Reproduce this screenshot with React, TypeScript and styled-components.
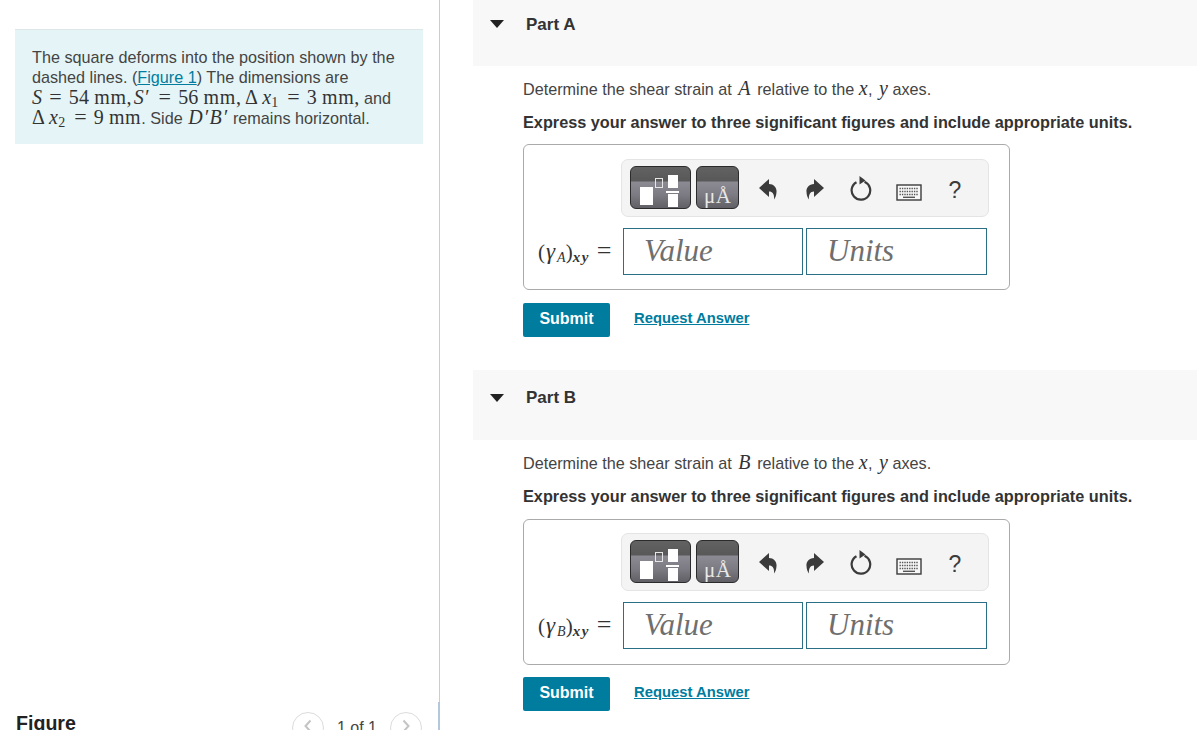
import React from "react";
import styled, { createGlobalStyle } from "styled-components";

const Global = createGlobalStyle`
  html, body { margin: 0; padding: 0; background: #fff; }
  body { font-family: "Liberation Sans", Arial, sans-serif; color: #444; overflow: hidden; }
`;

const Page = styled.div`
  width: 1197px;
  height: 730px;
  overflow: hidden;
  display: grid;
  grid-template-columns: 440px 1fr;
`;

const LeftColumn = styled.aside`
  position: relative;
  height: 730px;
  border-right: 1px solid #c9cdd0;
  box-sizing: border-box;
  padding: 29px 16px 0 15px;
  display: flex;
  flex-direction: column;
`;

const ScrollThumb = styled.div`
  position: absolute;
  right: -1px;
  top: 702px;
  width: 2px;
  height: 28px;
  background: #b5c7dc;
`;

const Intro = styled.div`
  flex: none;
  background: #e5f5f7;
  border-top: 1px solid #dfe6e6;
  height: 115px;
  box-sizing: border-box;
  padding: 18px 17px 0 17px;
  font-size: 16.2px;
  line-height: 19.5px;
  color: #444;
  white-space: nowrap;
`;

const TextLine = styled.div<{ $pt?: number }>`
  height: 19.5px;
  padding-top: ${(p) => p.$pt ?? 0}px;
`;

const FigureLink = styled.a`
  color: #007c9e;
  text-decoration: underline;
`;

const M = styled.span`
  display: inline-block;
  font-family: "Liberation Serif", "Times New Roman", serif;
  font-size: 20px;
  line-height: 17px;
  color: #333;
  letter-spacing: 0.2px;
`;

const MI = styled(M)<{ $l?: number; $r?: number; $track?: number }>`
  font-style: italic;
  margin-left: ${(p) => p.$l ?? 0}px;
  margin-right: ${(p) => p.$r ?? 0}px;
  letter-spacing: ${(p) => p.$track ?? 0.2}px;
`;

const Delta = styled(M)`
  margin-right: 4px;
`;

const Eq = styled(M)`
  margin: 0 7px 0 7px;
  font-size: 22px;
  line-height: 15px;
`;

const Sub = styled.span`
  display: inline-block;
  margin-right: 2px;
  font-family: "Liberation Serif", serif;
  font-size: 14px;
  line-height: 10px;
  position: relative;
  top: 3px;
  color: #333;
`;

const Unit = styled(M)`
  margin-left: 5px;
  letter-spacing: 0.6px;
`;

const Gap = styled.span<{ $w: number }>`
  display: inline-block;
  width: ${(p) => p.$w}px;
`;

const FigureBar = styled.div`
  flex: none;
  margin-top: 567px;
  display: flex;
  align-items: flex-start;
  justify-content: space-between;
  height: 40px;
`;

const FigureTitle = styled.div`
  font-weight: 700;
  font-size: 19.6px;
  line-height: 22px;
  color: #222;
  padding: 1px 0 0 1px;
`;

const Pager = styled.div`
  display: flex;
  align-items: flex-start;
  gap: 13px;
  margin-right: 1px;
  margin-top: 1px;
`;

const PagerButton = styled.div`
  width: 32px;
  height: 32px;
  border: 1px solid #dcdcdc;
  border-radius: 50%;
  box-sizing: border-box;
  display: flex;
  align-items: center;
  justify-content: center;
  background: #fff;
  svg { display: block; margin-bottom: 5px; }
`;

const PagerText = styled.div`
  font-size: 16px;
  line-height: 17px;
  padding-top: 7px;
  color: #444;
`;

const RightColumn = styled.main`
  padding-left: 33px;
  display: flex;
  flex-direction: column;
`;

const PartHeader = styled.div<{ $h: number; $pt: number }>`
  height: ${(p) => p.$h}px;
  box-sizing: border-box;
  background: #f8f8f8;
  padding-top: ${(p) => p.$pt}px;
  padding-left: 17px;
  display: flex;
  align-items: flex-start;
  gap: 22px;
`;

const Caret = styled.div<{ $mt: number }>`
  width: 0;
  height: 0;
  margin-top: ${(p) => p.$mt}px;
  border-left: 7px solid transparent;
  border-right: 7px solid transparent;
  border-top: 8px solid #222;
`;

const PartTitle = styled.div`
  font-weight: 700;
  font-size: 17px;
  line-height: 20px;
  color: #333;
`;

const PartBody = styled.div`
  padding: 13px 0 0 50px;
`;

const Prompt = styled.div`
  height: 20px;
  font-size: 16.2px;
  line-height: 20px;
  color: #444;
  white-space: nowrap;
`;

const Instruction = styled.div`
  margin-top: 13px;
  font-size: 16.27px;
  font-weight: 700;
  line-height: 20px;
  color: #333;
  white-space: nowrap;
`;

const AnswerBox = styled.div<{ $late?: boolean }>`
  margin-top: ${(p) => (p.$late ? 13 : 12)}px;
  width: 487px;
  height: 146px;
  box-sizing: border-box;
  border: 1px solid #aaa;
  border-radius: 6px;
  padding: ${(p) => (p.$late ? 13 : 14)}px 20px 0 14px;
  display: flex;
  flex-direction: column;
`;

const Toolbar = styled.div`
  margin-left: 83px;
  width: 368px;
  height: 58px;
  flex: none;
  box-sizing: border-box;
  background: #f4f4f4;
  border: 1px solid #e4e4e4;
  border-radius: 7px;
  padding: 6px 0 0 8px;
  display: flex;
  align-items: flex-start;
`;

const TemplateButton = styled.div<{ $w: number }>`
  position: relative;
  flex: none;
  width: ${(p) => p.$w}px;
  height: 43px;
  box-sizing: border-box;
  margin-right: 5px;
  border: 1px solid #2b2b2b;
  border-radius: 6px;
  overflow: hidden;
  background: linear-gradient(#626262 0, #585858 14px, #8c8a92 15px, #7c7a82 28px, #5f5e64 42px);
  svg { display: block; }
`;

const MicroText = styled.span`
  position: absolute;
  left: 7px;
  bottom: -1px;
  font-family: "Liberation Serif", serif;
  font-size: 21px;
  line-height: 26px;
  color: #e8e8e8;
  letter-spacing: 0.5px;
  white-space: nowrap;
`;

const ToolIcon = styled.div<{ $w: number }>`
  flex: none;
  width: ${(p) => p.$w}px;
  height: 43px;
  box-sizing: border-box;
  padding-top: 4px;
  display: flex;
  align-items: center;
  justify-content: center;
  color: #3b3b3b;
  font-size: 23px;
  line-height: 30px;
  svg { display: block; }
`;

const InputRow = styled.div`
  margin-top: 11px;
  display: flex;
  align-items: center;
`;

const MathLabel = styled.div`
  width: 85px;
  flex: none;
  display: flex;
  align-items: baseline;
  font-family: "Liberation Serif", serif;
  font-size: 21px;
  color: #333;
  white-space: nowrap;
`;

const Gamma = styled.i`
  margin: 0 2px 0 1px;
  font-size: 23px;
`;

const LabelEq = styled.span`
  margin-left: 7px;
  font-size: 26px;
  line-height: 20px;
`;

const LabelSub = styled.span<{ $bold?: boolean }>`
  font-size: ${(p) => (p.$bold ? 15 : 14)}px;
  font-style: italic;
  font-weight: ${(p) => (p.$bold ? 700 : 400)};
  letter-spacing: ${(p) => (p.$bold ? 1.5 : 0)}px;
  position: relative;
  top: 3px;
  line-height: 0;
`;

const Field = styled.div<{ $w: number }>`
  flex: none;
  width: ${(p) => p.$w}px;
  height: 47px;
  box-sizing: border-box;
  margin-right: 3px;
  border: 1px solid #2a6f85;
  background: #fff;
  padding-left: 20px;
  font-family: "Liberation Serif", serif;
  font-style: italic;
  font-size: 31px;
  line-height: 44px;
  color: #6f6f6f;
`;

const Actions = styled.div<{ $late?: boolean }>`
  margin-top: ${(p) => (p.$late ? 12 : 13)}px;
  display: flex;
  align-items: center;
  gap: 24px;
`;

const SubmitButton = styled.button`
  width: 87px;
  height: 34px;
  padding: 0 0 3px;
  border: none;
  border-radius: 2px;
  background: #007c9e;
  color: #fff;
  font-family: "Liberation Sans", Arial, sans-serif;
  font-weight: 700;
  font-size: 16px;
`;

const RequestLink = styled.a`
  font-size: 14.8px;
  font-weight: 700;
  color: #007c9e;
  text-decoration: underline;
  margin-top: -4px;
`;

const Spacer = styled.div<{ $h: number }>`
  height: ${(p) => p.$h}px;
`;

const Chevron = ({ dir }: { dir: "left" | "right" }) => (
  <svg width="10" height="14" viewBox="0 0 10 14" fill="none" stroke="#c4c4c4" strokeWidth="2">
    <path d={dir === "left" ? "M7.5 1.5 L2.5 7 L7.5 12.5" : "M2.5 1.5 L7.5 7 L2.5 12.5"} />
  </svg>
);

const FractionGlyph = () => (
  <svg width="59" height="41" viewBox="0 0 59 41" fill="none">
    <rect x="9" y="20" width="13" height="18" fill="#fff" />
    <rect x="24.5" y="11.5" width="7" height="9" stroke="#e6e6e6" strokeWidth="1" />
    <rect x="37" y="8" width="10" height="13" fill="#fff" />
    <rect x="35" y="24" width="13" height="2" fill="#fff" />
    <rect x="37" y="27" width="10" height="13" fill="#fff" />
  </svg>
);

const ReplyIcon = ({ flip }: { flip?: boolean }) => (
  <svg width="18" height="21" viewBox="0 0 18 21" style={flip ? { transform: "scaleX(-1)" } : undefined}>
    <path d="M0 9 L10 0 V5 C15 5 18 9 17.5 13 C17.4 16 16.5 18.5 15 20.5 C15.5 16 14 12.5 10 12.5 V18 Z" fill="#3b3b3b" />
  </svg>
);

const ResetIcon = () => (
  <svg width="24" height="26" viewBox="0 0 24 26" fill="none" style={{ marginLeft: -3, marginTop: -3 }}>
    <path d="M7.5 7.2 A9.3 9.3 0 1 0 15.5 6.8" stroke="#3b3b3b" strokeWidth="2.2" />
    <path d="M10.5 1 L16.5 5.5 L10.5 9.5 Z" fill="#3b3b3b" />
  </svg>
);

const KeyboardIcon = () => (
  <svg width="26" height="17" viewBox="0 0 26 17" fill="none" style={{ marginLeft: -1, marginTop: 5 }}>
    <rect x="1" y="1" width="24" height="15" stroke="#3b3b3b" strokeWidth="1.4" fill="#f8f8f8" />
    <path d="M3.5 4.5 H22.5 M3.5 7.5 H22.5 M3.5 10.5 H22.5" stroke="#555" strokeWidth="1.6" strokeDasharray="1.4 1" />
    <path d="M7 13.3 H19" stroke="#555" strokeWidth="1.4" />
  </svg>
);

const Answer = ({ point, late }: { point: string; late?: boolean }) => (
  <>
    <AnswerBox $late={late}>
      <Toolbar>
        <TemplateButton $w={61}>
          <FractionGlyph />
        </TemplateButton>
        <TemplateButton $w={43}>
          <MicroText>μÅ</MicroText>
        </TemplateButton>
        <ToolIcon $w={47}><ReplyIcon /></ToolIcon>
        <ToolIcon $w={48}><ReplyIcon flip /></ToolIcon>
        <ToolIcon $w={47}><ResetIcon /></ToolIcon>
        <ToolIcon $w={46}><KeyboardIcon /></ToolIcon>
        <ToolIcon $w={46}>?</ToolIcon>
      </Toolbar>
      <InputRow>
        <MathLabel>
          (<Gamma>γ</Gamma>
          <LabelSub>{point}</LabelSub>)<LabelSub $bold>xy</LabelSub>
          <LabelEq>=</LabelEq>
        </MathLabel>
        <Field $w={180}>Value</Field>
        <Field $w={181}>Units</Field>
      </InputRow>
    </AnswerBox>
    <Actions $late={late}>
      <SubmitButton>Submit</SubmitButton>
      <RequestLink>Request Answer</RequestLink>
    </Actions>
  </>
);

export default function App() {
  return (
    <Page>
      <Global />
      <LeftColumn>
        <Intro>
          <TextLine>The square deforms into the position shown by the</TextLine>
          <TextLine>
            dashed lines. (<FigureLink>Figure 1</FigureLink>) The dimensions are
          </TextLine>
          <TextLine $pt={2}>
            <MI>S</MI><Eq>=</Eq><M>54</M><Unit>mm</Unit><M>,</M><Gap $w={2} />
            <MI $r={3}>S′</MI><Eq>=</Eq><M>56</M><Unit>mm</Unit><M>,</M><Gap $w={4} />
            <Delta>Δ</Delta><MI>x</MI><Sub>1</Sub><Eq>=</Eq><M>3</M><Unit>mm</Unit><M>,</M> and
          </TextLine>
          <TextLine>
            <Delta>Δ</Delta><MI>x</MI><Sub>2</Sub><Eq>=</Eq><M>9</M><Unit>mm</Unit>. Side{" "}
            <MI $l={1} $track={1.2}>D′B′</MI> remains horizontal.
          </TextLine>
        </Intro>
        <FigureBar>
          <FigureTitle>Figure</FigureTitle>
          <Pager>
            <PagerButton><Chevron dir="left" /></PagerButton>
            <PagerText>1 of 1</PagerText>
            <PagerButton><Chevron dir="right" /></PagerButton>
          </Pager>
        </FigureBar>
        <ScrollThumb />
      </LeftColumn>
      <RightColumn>
        <PartHeader $h={66} $pt={15}>
          <Caret $mt={5} />
          <PartTitle>Part A</PartTitle>
        </PartHeader>
        <PartBody>
          <Prompt>
            Determine the shear strain at <MI $l={2} $r={2}>A</MI> relative to the <MI>x</MI>, <MI $l={2}>y</MI> axes.
          </Prompt>
          <Instruction>Express your answer to three significant figures and include appropriate units.</Instruction>
          <Answer point="A" />
        </PartBody>
        <Spacer $h={33} />
        <PartHeader $h={70} $pt={18}>
          <Caret $mt={6} />
          <PartTitle>Part B</PartTitle>
        </PartHeader>
        <PartBody>
          <Prompt>
            Determine the shear strain at <MI $l={2} $r={2}>B</MI> relative to the <MI>x</MI>, <MI $l={2}>y</MI> axes.
          </Prompt>
          <Instruction>Express your answer to three significant figures and include appropriate units.</Instruction>
          <Answer point="B" late />
        </PartBody>
      </RightColumn>
    </Page>
  );
}
